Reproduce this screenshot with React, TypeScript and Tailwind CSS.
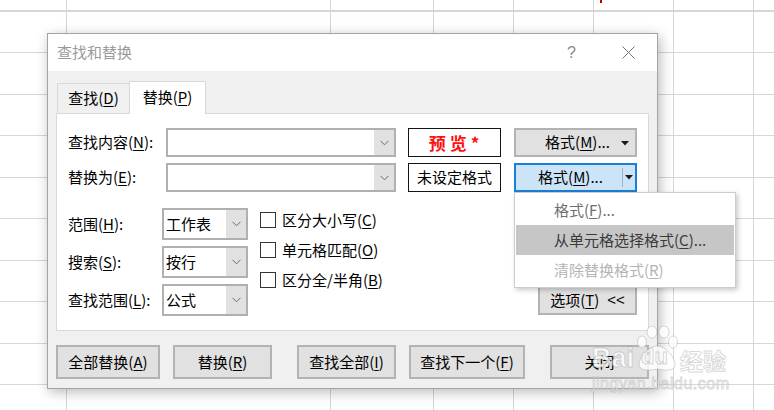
import React from 'react';

const FONT = "font-['Noto_Sans_CJK_SC','Noto_Sans',sans-serif]";

function Chevron() {
  return (
    <svg width="9" height="6" viewBox="0 0 9 6" className="block">
      <polyline points="0.5,0.8 4.5,4.8 8.5,0.8" fill="none" stroke="#6a6a6a" strokeWidth="1" />
    </svg>
  );
}

function Caret() {
  return (
    <svg width="8" height="5" viewBox="0 0 8 5" className="block">
      <polygon points="0,0 8,0 4,4.5" fill="#1a1a1a" />
    </svg>
  );
}

function Combo({ text = '', className = '' }: { text?: string; className?: string }) {
  return (
    <div className={`flex border-2 border-[#b0b0b0] bg-white ${className}`}>
      <div className="flex flex-1 items-center pl-[2px] text-[15px] text-black">{text}</div>
      <div className="flex w-[20px] items-center justify-center bg-[#e1e1e1]">
        <Chevron />
      </div>
    </div>
  );
}

function Btn({ children, className = '' }: { children: React.ReactNode; className?: string }) {
  return (
    <div
      className={`flex items-center justify-center border-2 border-[#b3b3b3] bg-[#e1e1e1] text-[15px] text-black ${className}`}
    >
      {children}
    </div>
  );
}

function U({ children }: { children: React.ReactNode }) {
  return <span className="underline underline-offset-2 decoration-1">{children}</span>;
}

function Check({ children }: { children: React.ReactNode }) {
  return (
    <div className="flex h-[30px] items-center">
      <div className="h-[16px] w-[16px] border border-[#333] bg-white" />
      <span className="ml-[6px] text-[15px] text-black">{children}</span>
    </div>
  );
}

function Watermark() {
  return (
    <div className="pointer-events-none absolute left-[592px] top-[326px] z-30 select-none opacity-80">
      <div className="flex items-end">
        <span className="text-[27px] font-bold leading-none text-white [-webkit-text-stroke:1px_rgba(150,150,150,0.45)] font-['Liberation_Sans',sans-serif]">
          Bai
        </span>
        <div className="relative ml-[2px] h-[46px] w-[42px]">
          <svg width="42" height="46" viewBox="0 0 42 46" className="block">
            <g fill="#ffffff" stroke="rgba(150,150,150,0.45)" strokeWidth="1">
              <ellipse cx="6" cy="16" rx="4.5" ry="6" />
              <ellipse cx="16" cy="6" rx="5" ry="6" />
              <ellipse cx="28" cy="6" rx="5" ry="6" />
              <ellipse cx="37" cy="16" rx="4.5" ry="6" />
              <path d="M21 20 C 12 20, 3 32, 3 38 C 3 45, 12 45, 21 43 C 30 45, 39 45, 39 38 C 39 32, 30 20, 21 20 Z" />
            </g>
          </svg>
          <span className="absolute left-[5px] top-[20px] text-[22px] font-bold leading-none text-white [-webkit-text-stroke:1px_rgba(150,150,150,0.45)] font-['Liberation_Sans',sans-serif]">
            du
          </span>
        </div>
        <span className="ml-[2px] text-[23px] font-bold leading-[24px] text-white [-webkit-text-stroke:1px_rgba(150,150,150,0.45)]">
          经验
        </span>
      </div>
      <div className="mt-[4px] text-[16px] leading-[16px] tracking-[0.5px] text-white [-webkit-text-stroke:1px_rgba(150,150,150,0.45)] font-['Liberation_Sans',sans-serif]">
        jingyan.baidu.com
      </div>
    </div>
  );
}

export default function App() {
  const cols = [67, 264, 103, 80, 80, 80, 80, 80];

  return (
    <div className={`relative h-[410px] w-[774px] overflow-hidden bg-white ${FONT}`}>
      {/* Spreadsheet grid behind the dialog */}
      <div className="flex h-full w-full bg-[repeating-linear-gradient(to_bottom,transparent_0,transparent_10.5px,#d6d6d6_10.5px,#d6d6d6_11.5px,transparent_11.5px,transparent_41.5px)]">
        {cols.map((w, i) => (
          <div key={i} className="h-full shrink-0 border-r border-[#d6d6d6]" style={{ width: w }} />
        ))}
      </div>
      <div className="absolute left-[600px] top-0 h-[3px] w-[2px] bg-[#c00000]" />

      {/* Dialog window */}
      <div className="absolute left-[47px] top-[33px] flex h-[356px] w-[611px] flex-col border border-[#a3a3a3] bg-[#f0f0f0] shadow-[2px_3px_12px_rgba(0,0,0,0.28)]">
        {/* Title bar */}
        <div className="flex h-[37px] items-center bg-white pl-[9px] pr-[22px]">
          <span className="text-[15px] text-[#9a9a9a]">查找和替换</span>
          <span className="ml-auto text-[16px] text-[#8a8a8a] font-['Liberation_Sans',sans-serif]">?</span>
          <svg width="13" height="13" viewBox="0 0 13 13" className="ml-[46px] block">
            <path d="M0.5 0.5 L12.5 12.5 M12.5 0.5 L0.5 12.5" stroke="#777" strokeWidth="1" />
          </svg>
        </div>

        {/* Body */}
        <div className="flex flex-1 flex-col px-[8px] pt-[10px]">
          {/* Tabs */}
          <div className="flex h-[32px] items-end pl-[1px]">
            <div className="flex h-[30px] w-[72px] items-center justify-center border-l border-t border-[#d9d9d9] text-[15px] text-black">
              查找(<U>D</U>)
            </div>
            <div className="relative z-10 -mb-px flex h-[33px] w-[77px] items-center justify-center border-x border-t border-[#d9d9d9] bg-white pb-[1px] text-[15px] text-black">
              替换(<U>P</U>)
            </div>
          </div>

          {/* Tab panel */}
          <div className="h-[218px] border border-[#d9d9d9] bg-white pl-[11px] pr-[11px] pt-[14px]">
            {/* Find what */}
            <div className="flex h-[29px] items-center">
              <div className="w-[98px] text-[15px] text-black">
                查找内容(<U>N</U>):
              </div>
              <Combo className="h-full w-[230px]" />
              <div className="ml-[12px] flex h-full w-[93px] items-center justify-center border-[1.5px] border-[#141414] pl-[3px] text-[17px] font-bold tracking-[4px] text-[#ff1010]">
                预览*
              </div>
              <Btn className="relative ml-[13px] h-full w-[123px]">
                <span className="ml-[4px]">
                  格式(<U>M</U>)...
                </span>
                <div className="absolute right-[6px] top-[11px]">
                  <Caret />
                </div>
              </Btn>
            </div>

            {/* Replace with */}
            <div className="mt-[6px] flex h-[29px] items-center">
              <div className="w-[98px] text-[15px] text-black">
                替换为(<U>E</U>):
              </div>
              <Combo className="h-full w-[230px]" />
              <div className="ml-[12px] flex h-full w-[93px] items-center justify-center border-[1.5px] border-[#141414] text-[15px] text-black">
                未设定格式
              </div>
              <div className="relative ml-[13px] h-full w-[123px]">
                <div className="flex h-full items-center border-2 border-[#1c7fd6] bg-[#cce4f7] text-[15px] text-black">
                  <span className="flex-1 pl-[3px] text-center">
                    格式(<U>M</U>)...
                  </span>
                  <div className="h-[19px] w-px bg-[#9fb3c4]" />
                  <div className="flex w-[12px] justify-center pr-[1px]">
                    <Caret />
                  </div>
                </div>

                {/* Drop-down menu */}
                <div className="absolute left-0 top-full z-20 w-[222px] border border-[#cccccc] bg-white py-[2px] shadow-[2px_2px_5px_rgba(0,0,0,0.22)]">
                  <div className="mx-px flex h-[30px] items-center pl-[38px] text-[15px] text-[#6e6e6e]">
                    格式(<U>F</U>)...
                  </div>
                  <div className="mx-px flex h-[30px] items-center bg-[#c6c6c6] pl-[38px] text-[15px] text-[#3a3a3a]">
                    从单元格选择格式(<U>C</U>)...
                  </div>
                  <div className="mx-px flex h-[30px] items-center pl-[38px] text-[15px] text-[#b4b4b4]">
                    清除替换格式(<U>R</U>)
                  </div>
                </div>
              </div>
            </div>

            {/* Options */}
            <div className="mt-[16px] flex">
              <div className="flex flex-col gap-[6px]">
                <div className="flex h-[32px] items-center">
                  <div className="w-[94px] text-[15px] text-black">
                    范围(<U>H</U>):
                  </div>
                  <Combo text="工作表" className="h-full w-[86px]" />
                </div>
                <div className="flex h-[32px] items-center">
                  <div className="w-[94px] text-[15px] text-black">
                    搜索(<U>S</U>):
                  </div>
                  <Combo text="按行" className="h-full w-[86px]" />
                </div>
                <div className="flex h-[32px] items-center">
                  <div className="w-[94px] text-[15px] text-black">
                    查找范围(<U>L</U>):
                  </div>
                  <Combo text="公式" className="h-full w-[86px]" />
                </div>
              </div>

              <div className="-mt-[3px] ml-[12px] flex flex-col">
                <Check>
                  区分大小写(<U>C</U>)
                </Check>
                <Check>
                  单元格匹配(<U>O</U>)
                </Check>
                <Check>
                  区分全/半角(<U>B</U>)
                </Check>
              </div>

              <Btn className="mb-[1px] ml-auto h-[30px] w-[99px] self-end">
                选项(<U>T</U>)<span className="ml-[8px] font-['Liberation_Sans',sans-serif]">&lt;&lt;</span>
              </Btn>
            </div>
          </div>

          {/* Bottom buttons */}
          <div className="mt-[14px] flex h-[34px]">
            <Btn className="w-[104px]">
              全部替换(<U>A</U>)
            </Btn>
            <Btn className="ml-[13px] w-[99px]">
              替换(<U>R</U>)
            </Btn>
            <Btn className="ml-[25px] w-[99px]">
              查找全部(<U>I</U>)
            </Btn>
            <Btn className="ml-[13px] w-[116px]">
              查找下一个(<U>F</U>)
            </Btn>
            <Btn className="ml-[25px] w-[99px]">关闭</Btn>
          </div>
        </div>
      </div>

      <Watermark />
    </div>
  );
}
